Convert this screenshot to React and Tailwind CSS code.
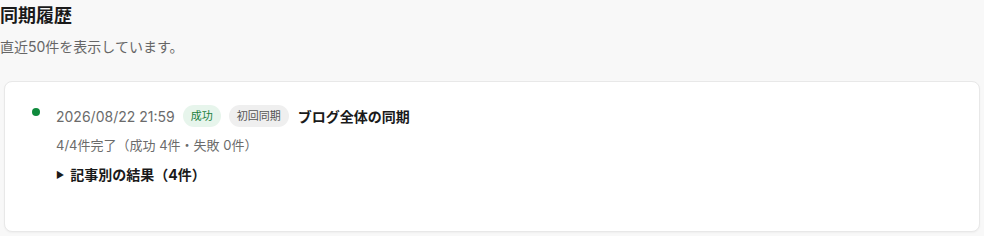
const font = { fontFamily: 'Inter, "Noto Sans CJK JP", sans-serif' };

const SyncEntry = () => (
  <div className="flex items-start gap-4">
    <span className="mt-[3px] h-2 w-2 shrink-0 rounded-full bg-[#0f8a3c]" />
    <div className="flex flex-col">
      <div className="flex items-center gap-2">
        <span className="text-[14px] text-[#6b6b6b]">2026/08/22 21:59</span>
        <span className="rounded-full bg-[#e7f5ec] px-2 py-[3px] text-[11px] leading-4 text-[#1a7f3c]">成功</span>
        <span className="rounded-full bg-[#efefef] px-2 py-[3px] text-[11px] leading-4 text-[#555]">初回同期</span>
        <span className="ml-px text-[14px] font-bold text-[#1a1a1a]">ブログ全体の同期</span>
      </div>
      <div className="mt-[9px] text-[13px] leading-[18px] text-[#6b6b6b]">
        4/4件完了（成功 4件・失敗 0件）
      </div>
      <div className="mt-[11px] flex items-center gap-[6px] text-[14px] leading-5 font-bold text-[#1a1a1a]">
        <span className="text-[9px] font-normal">▶</span>
        <span>記事別の結果（4件）</span>
      </div>
    </div>
  </div>
);

export default function App() {
  return (
    <div className="min-h-[236px] bg-[#f8f8f8]" style={font}>
      <h2 className="pt-[2px] text-[18px] leading-7 font-bold text-[#1a1a1a]">同期履歴</h2>
      <p className="mt-[7px] text-[14px] leading-5 text-[#666]">直近50件を表示しています。</p>
      <div className="mx-1 mt-6 rounded-lg border border-[#e8e8e8] bg-white pt-[23px] pb-[46px] pl-[27px] shadow-[0_1px_2px_rgba(0,0,0,0.04)]">
        <SyncEntry />
      </div>
    </div>
  );
}
